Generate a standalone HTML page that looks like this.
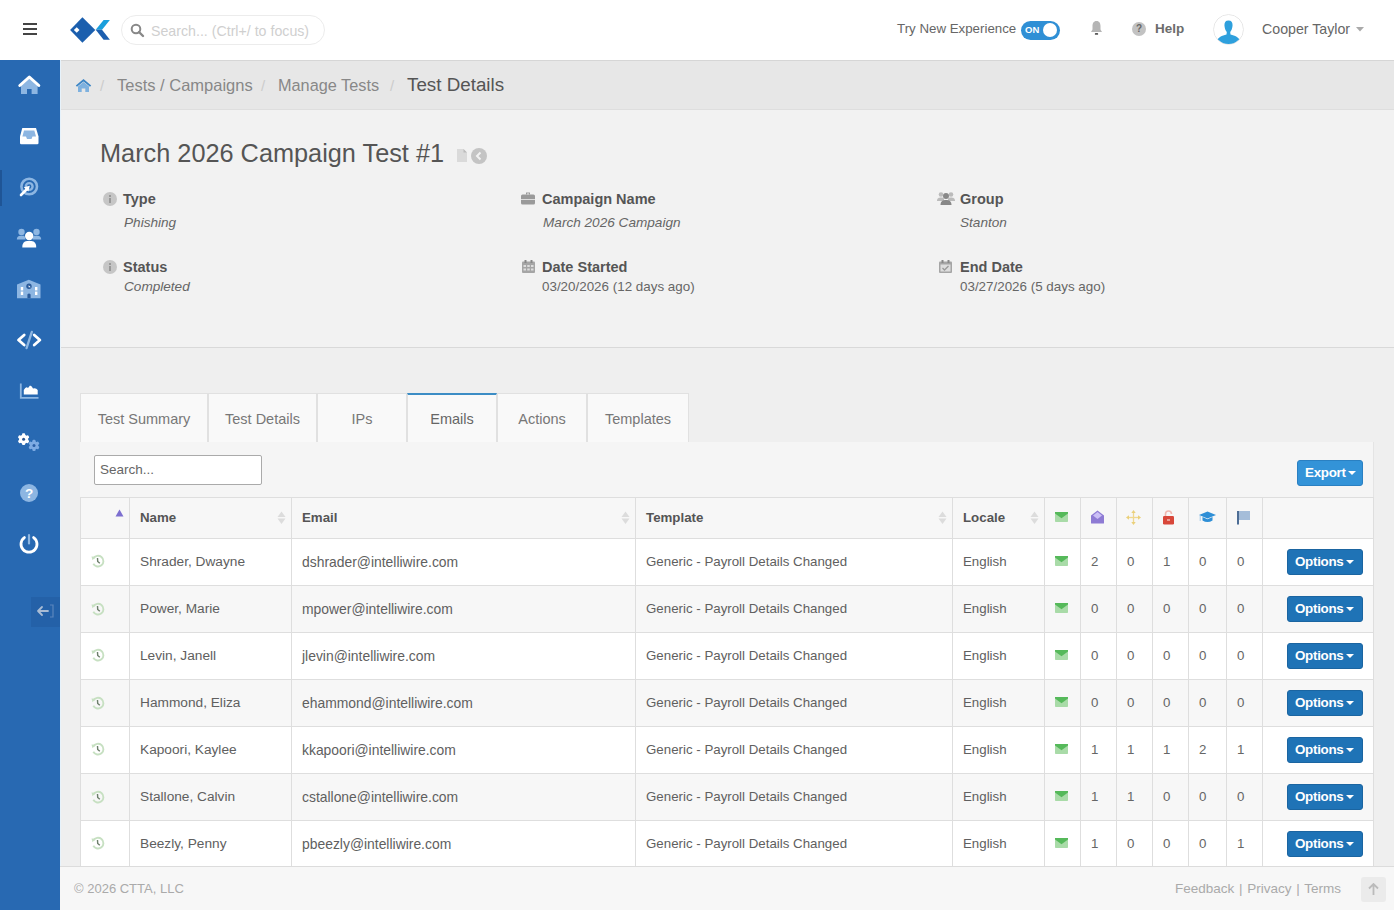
<!DOCTYPE html>
<html><head><meta charset="utf-8">
<style>
*{box-sizing:border-box;margin:0;padding:0}
html,body{width:1394px;height:910px;overflow:hidden}
body{font-family:"Liberation Sans",sans-serif;background:#efefef;position:relative;color:#555}
.abs{position:absolute}
.t{position:absolute;white-space:nowrap;line-height:1}
#top{left:0;top:0;width:1394px;height:60px;background:#fff}
#side{left:0;top:60px;width:60px;height:850px;background:#2869b2}
#crumb{left:60px;top:60px;width:1334px;height:50px;background:#e7e7e7;border-top:1px solid #d6d6d6;border-bottom:1px solid #dedede}
#info{left:60px;top:110px;width:1334px;height:238px;background:#f2f2f2;border-bottom:1px solid #d9d9d9}
.lbl{font-size:14.5px;font-weight:bold;color:#555}
.val{font-size:13px;color:#666}
.val i{font-style:italic;font-size:13.6px}
.tab{position:absolute;top:393px;height:49px;background:#f9f9f9;border:1px solid #e1e1e1;border-bottom:none;font-size:14.5px;color:#777;text-align:center;line-height:50px}
#panel{left:80px;top:442px;width:1294px;height:470px;background:#f5f5f5;border-right:1px solid #e4e4e4}
table{position:absolute;left:80px;top:497px;border-collapse:collapse;table-layout:fixed;width:1293px}
td,th{border:1px solid #dedede;height:47px;font-size:13.3px;color:#606060;white-space:nowrap;text-align:left;padding:0 0 1px 10px;vertical-align:middle}
th{height:41px;font-weight:bold;background:#f7f7f7;color:#555;padding-bottom:2px}
tr.g td{background:#f7f7f7}
tr.w td{background:#fff}
td.n{padding-left:10px;color:#666}
.btn{position:absolute;color:#fff;font-weight:bold;font-size:13.4px;letter-spacing:-0.3px;border-radius:3px;line-height:24px;text-align:left}
#foot{left:60px;top:866px;width:1334px;height:44px;background:#f7f7f7;border-top:1px solid #dcdcdc}
</style></head><body>
<!-- header -->
<div id="top" class="abs">
  <div class="abs" style="left:23px;top:23px;width:14px;height:2px;background:#444"></div>
  <div class="abs" style="left:23px;top:28px;width:14px;height:2px;background:#444"></div>
  <div class="abs" style="left:23px;top:33px;width:14px;height:2px;background:#444"></div>
  <svg class="abs" style="left:69px;top:16px" width="43" height="28" viewBox="0 0 43 28">
    <polygon points="1.1,14 13.4,1.3 26.3,14 13.4,26.7" fill="#1b5fae"/>
    <rect x="5.7" y="12" width="4" height="4" fill="#fff" transform="rotate(45 7.7 14)"/>
    <polygon points="26.7,13.8 34.6,4.1 40.9,4.1 33,13.8" fill="#1a9fdc"/>
    <polygon points="26.7,13.8 33,13.8 40.9,23.7 34.6,23.7" fill="#1c5eaf"/>
  </svg>
  <div class="abs" style="left:121px;top:15px;width:204px;height:30px;border:1px solid #ececec;border-radius:15px"></div>
  <svg class="abs" style="left:130px;top:23px" width="15" height="15" viewBox="0 0 15 15"><circle cx="6" cy="6" r="4.3" fill="none" stroke="#888" stroke-width="2"/><line x1="9" y1="9" x2="13" y2="13" stroke="#888" stroke-width="2.4" stroke-linecap="round"/></svg>
  <div class="t" style="left:151px;top:24px;font-size:14.2px;color:#cfcfcf">Search... (Ctrl+/ to focus)</div>

  <div class="t" style="left:897px;top:22px;font-size:13.3px;color:#666">Try New Experience</div>
  <div class="abs" style="left:1021px;top:21px;width:39px;height:19px;border-radius:10px;background:#2f8fd5"></div>
  <div class="t" style="left:1025px;top:25px;font-size:9.5px;font-weight:bold;color:#fff">ON</div>
  <div class="abs" style="left:1043px;top:23px;width:14px;height:14px;border-radius:50%;background:#fff"></div>
  <svg class="abs" style="left:1090px;top:20px" width="13" height="16" viewBox="0 0 13 16"><path d="M6.5 1 C3.5 1 2.5 3.5 2.5 6 L2.5 9.5 L1 12 L12 12 L10.5 9.5 L10.5 6 C10.5 3.5 9.5 1 6.5 1Z" fill="#b5b5b5"/><rect x="4.8" y="13" width="3.4" height="1.8" rx="0.9" fill="#555"/></svg>
  <div class="abs" style="left:1132px;top:22px;width:14px;height:14px;border-radius:50%;background:#c2c2c2"></div>
  <div class="t" style="left:1136px;top:24px;font-size:10px;font-weight:bold;color:#666">?</div>
  <div class="t" style="left:1155px;top:22px;font-size:13.5px;font-weight:bold;color:#6c6c6c">Help</div>
  <div class="abs" style="left:1213px;top:14px;width:31px;height:31px;border-radius:50%;border:1px solid #e6e6e6;overflow:hidden;background:#fff;clip-path:circle(50%)">
    <svg width="31" height="31" viewBox="0 0 31 31" style="position:absolute;left:-1px;top:-1px"><path d="M15.5 6.5 C12.2 6.5 11.2 9 11.5 12 C11.8 15 12.8 17 13.8 18 L13.5 20.5 C9 21.5 5 23 3.5 28 L3.5 31 L27.5 31 L27.5 28 C26 23 22 21.5 17.5 20.5 L17.2 18 C18.2 17 19.2 15 19.5 12 C19.8 9 18.8 6.5 15.5 6.5Z" fill="#2ea0dd"/></svg>
  </div>
  <div class="t" style="left:1262px;top:22px;font-size:14.2px;color:#666">Cooper Taylor</div>
  <svg class="abs" style="left:1356px;top:27px" width="8" height="5" viewBox="0 0 8 5"><polygon points="0,0 8,0 4,4.5" fill="#aaa"/></svg>
</div>

<!-- sidebar -->
<div id="side" class="abs">
  <div class="abs" style="left:0;top:110px;width:2px;height:36px;background:#1f5596"></div>
  <div class="abs" style="left:31px;top:537px;width:29px;height:30px;background:#2461a8"></div>
  <svg class="abs" style="left:0;top:0" width="60" height="850" viewBox="0 60 60 850">
    <!-- home -->
    <path d="M21 85 L29.3 78 L37.6 85 L37.6 94 L31.6 94 L31.6 89 L27 89 L27 94 L21 94Z" fill="#8db6e2"/>
    <polyline points="19.8,85.5 29.3,77 38.8,85.5" fill="none" stroke="#fff" stroke-width="3" stroke-linecap="round" stroke-linejoin="round"/>
    <!-- inbox -->
    <path d="M22.3 128 L36 128 L38.5 136.5 L38.5 143 Q38.5 144.3 37.2 144.3 L21.3 144.3 Q20 144.3 20 143 L20 136.5Z" fill="#fff"/>
    <path d="M24 130.5 L34.3 130.5 L36 136.5 L32.5 136.5 L31.5 139 L27 139 L26 136.5 L22.4 136.5Z" fill="#8db6e2"/>
    <!-- target -->
    <circle cx="29.2" cy="186.5" r="7.8" fill="none" stroke="#8db6e2" stroke-width="2.6"/>
    <circle cx="29.2" cy="186.5" r="3.4" fill="none" stroke="#8db6e2" stroke-width="2.4"/>
    <line x1="21" y1="195" x2="27" y2="189" stroke="#fff" stroke-width="2.6" stroke-linecap="round"/>
    <polygon points="29.8,185.8 23.8,187.2 28.4,191.6" fill="#fff"/>
    <!-- users -->
    <circle cx="21.5" cy="232" r="3.2" fill="#8db6e2"/>
    <circle cx="36.5" cy="232" r="3.2" fill="#8db6e2"/>
    <path d="M16.8 239.5 Q17 235.8 20.5 235.8 L24 235.8 Q25.5 236.5 25.5 239.5Z" fill="#8db6e2"/>
    <path d="M32.5 239.5 Q32.5 236.5 34 235.8 L37.5 235.8 Q41 235.8 41.2 239.5Z" fill="#8db6e2"/>
    <circle cx="29.2" cy="236" r="4.2" fill="#fff"/>
    <path d="M22.3 247.5 Q22.3 241 27 241 L31.5 241 Q36.2 241 36.2 247.5Z" fill="#fff"/>
    <!-- building -->
    <path d="M17 284.5 L28.8 279.8 L40.5 284.5 L40.5 298.2 L17 298.2Z" fill="#8db6e2"/>
    <rect x="20.8" y="287" width="2.4" height="3.4" fill="#fff"/><rect x="20.8" y="291.6" width="2.4" height="3.4" fill="#fff"/>
    <rect x="35" y="287" width="2.4" height="3.4" fill="#fff"/><rect x="35" y="291.6" width="2.4" height="3.4" fill="#fff"/>
    <circle cx="29" cy="286.3" r="2.7" fill="#2b5c9c"/>
    <path d="M28.6 285.2 L30.8 287.2 L28.6 287.2Z" fill="#fff"/>
    <path d="M27.4 298.2 L27.4 294.6 Q29 292.6 30.6 294.6 L30.6 298.2Z" fill="#2b5c9c"/>
    <!-- code -->
    <polyline points="24.2,335 18.5,340 24.2,345" fill="none" stroke="#fff" stroke-width="2.8" stroke-linecap="round" stroke-linejoin="round"/>
    <polyline points="34.2,335 39.9,340 34.2,345" fill="none" stroke="#fff" stroke-width="2.8" stroke-linecap="round" stroke-linejoin="round"/>
    <line x1="31.8" y1="332" x2="26.6" y2="348" stroke="#8db6e2" stroke-width="2.4" stroke-linecap="round"/>
    <!-- chart -->
    <path d="M20.8 383.5 L20.8 397.8 L38.5 397.8" fill="none" stroke="#8db6e2" stroke-width="1.8"/>
    <path d="M23.8 394.6 L23.8 390 Q26 386 28 388 L30 385.5 Q32 386 33 388.5 Q36 387.5 37.7 390 L37.7 394.6Z" fill="#fff"/>
    <!-- cogs -->
    <g transform="translate(23.6 439.2)" fill="#fff"><circle r="4.5"/><rect x="-1.6" y="-5.9" width="3.2" height="11.8" rx="1.1" transform="rotate(0)"/><rect x="-1.6" y="-5.9" width="3.2" height="11.8" rx="1.1" transform="rotate(60)"/><rect x="-1.6" y="-5.9" width="3.2" height="11.8" rx="1.1" transform="rotate(120)"/><circle r="1.5" fill="#2a5590"/></g>
    <g transform="translate(34 445.4)" fill="#7eabe3"><circle r="4.199999999999999"/><rect x="-1.6" y="-5.6" width="3.2" height="11.2" rx="1.1" transform="rotate(0)"/><rect x="-1.6" y="-5.6" width="3.2" height="11.2" rx="1.1" transform="rotate(60)"/><rect x="-1.6" y="-5.6" width="3.2" height="11.2" rx="1.1" transform="rotate(120)"/><circle r="1.5" fill="#2b5fa6"/></g>
    <!-- help -->
    <circle cx="29" cy="493" r="9" fill="#8db6e2"/>
    <text x="29" y="498.2" font-family="Liberation Sans" font-weight="bold" font-size="13.5" fill="#fff" text-anchor="middle">?</text>
    <!-- power -->
    <path d="M24.4 537.6 A8 8 0 1 0 33.6 537.6" fill="none" stroke="#fff" stroke-width="2.8" stroke-linecap="round"/>
    <line x1="29" y1="535" x2="29" y2="543.5" stroke="#8db6e2" stroke-width="2.2" stroke-linecap="round"/>
    <!-- collapse -->
    <path d="M38 611 L48 611 M42 607 L38 611 L42 615" fill="none" stroke="#a9bcd4" stroke-width="1.8" stroke-linecap="round" stroke-linejoin="round"/>
    <path d="M50 605 L53 605 L53 617 L50 617" fill="none" stroke="#5b86bd" stroke-width="1.2"/>
  </svg>
</div>

<!-- breadcrumb -->
<div id="crumb" class="abs">
  <svg class="abs" style="left:15px;top:17px" width="17" height="15" viewBox="0 0 17 15"><path d="M8.5 1 L0.8 7.5 L2 8.8 L8.5 3.4 L15 8.8 L16.2 7.5Z" fill="#3d86c6"/><path d="M3 8.5 L8.5 4 L14 8.5 L14 14 L10.3 14 L10.3 10.5 L6.7 10.5 L6.7 14 L3 14Z" fill="#7eb1df"/></svg>
  <div class="t" style="left:40px;top:17px;font-size:15px;color:#ccc">/</div>
  <div class="t" style="left:57px;top:16px;font-size:16.5px;color:#888">Tests / Campaigns</div>
  <div class="t" style="left:201px;top:17px;font-size:15px;color:#ccc">/</div>
  <div class="t" style="left:218px;top:16px;font-size:16.3px;color:#888">Manage Tests</div>
  <div class="t" style="left:330px;top:17px;font-size:15px;color:#ccc">/</div>
  <div class="t" style="left:347px;top:15px;font-size:18.8px;color:#555">Test Details</div>
</div>

<!-- info -->
<div id="info" class="abs">
  <div class="t" style="left:40px;top:31px;font-size:25.3px;color:#555">March 2026 Campaign Test #1</div>
  <svg class="abs" style="left:396px;top:38px" width="12" height="15" viewBox="0 0 12 15"><path d="M1 1 L7.5 1 L11 4.5 L11 14 L1 14Z" fill="#dadada"/><path d="M7.5 1 L7.5 4.5 L11 4.5Z" fill="#bbb"/></svg>
  <div class="abs" style="left:411px;top:38px;width:16px;height:16px;border-radius:50%;background:#c4c4c4"></div>
  <svg class="abs" style="left:411px;top:38px" width="16" height="16" viewBox="0 0 16 16"><polyline points="9.5,4.5 6,8 9.5,11.5" fill="none" stroke="#f2f2f2" stroke-width="2"/></svg>

  <!-- col1 -->
  <div class="abs" style="left:43px;top:82px;width:14px;height:14px;border-radius:50%;background:#c6c6c6"></div>
  <div class="abs" style="left:49px;top:85px;width:2px;height:2px;background:#999"></div>
  <div class="abs" style="left:49px;top:88px;width:1.6px;height:5px;background:#999"></div>
  <div class="t lbl" style="left:63px;top:82px">Type</div>
  <div class="t val" style="left:64px;top:106px"><i>Phishing</i></div>
  <div class="abs" style="left:43px;top:150px;width:14px;height:14px;border-radius:50%;background:#c6c6c6"></div>
  <div class="abs" style="left:49px;top:153px;width:2px;height:2px;background:#999"></div>
  <div class="abs" style="left:49px;top:156px;width:1.6px;height:5px;background:#999"></div>
  <div class="t lbl" style="left:63px;top:150px">Status</div>
  <div class="t val" style="left:64px;top:170px"><i>Completed</i></div>

  <!-- col2 -->
  <svg class="abs" style="left:461px;top:82px" width="14" height="13" viewBox="0 0 14 13"><path d="M5 0.5 L9 0.5 L9 2.5 L8 2.5 L8 1.5 L6 1.5 L6 2.5 L5 2.5Z" fill="#999"/><rect x="0" y="2.5" width="14" height="10" rx="1.5" fill="#9a9a9a"/><rect x="0" y="7" width="14" height="1" fill="#ddd"/></svg>
  <div class="t lbl" style="left:482px;top:82px;font-size:14.5px">Campaign Name</div>
  <div class="t val" style="left:483px;top:106px"><i>March 2026 Campaign</i></div>
  <svg class="abs" style="left:462px;top:150px" width="13" height="13" viewBox="0 0 13 13"><rect x="0" y="1.5" width="13" height="11.5" rx="1" fill="#a5a5a5"/><rect x="2.5" y="0" width="2" height="3" fill="#888"/><rect x="8.5" y="0" width="2" height="3" fill="#888"/><g fill="#ddd"><rect x="1.5" y="5" width="2.5" height="2"/><rect x="5.25" y="5" width="2.5" height="2"/><rect x="9" y="5" width="2.5" height="2"/><rect x="1.5" y="8.5" width="2.5" height="2"/><rect x="5.25" y="8.5" width="2.5" height="2"/><rect x="9" y="8.5" width="2.5" height="2"/></g></svg>
  <div class="t lbl" style="left:482px;top:150px;font-size:14.5px">Date Started</div>
  <div class="t val" style="left:482px;top:170px;font-size:13.4px">03/20/2026 (12 days ago)</div>

  <!-- col3 -->
  <svg class="abs" style="left:877px;top:81px" width="18" height="15" viewBox="0 0 18 15"><circle cx="4" cy="3.5" r="2.3" fill="#bbb"/><circle cx="14" cy="3.5" r="2.3" fill="#bbb"/><path d="M0 10 C0 7 2 6.5 4 6.5 C6 6.5 7 7 7 8 L7 10Z" fill="#bbb"/><path d="M11 8 C11 7 12 6.5 14 6.5 C16 6.5 18 7 18 10 L11 10Z" fill="#bbb"/><circle cx="9" cy="5" r="3" fill="#888"/><path d="M3.5 14 C3.5 10 6 9 9 9 C12 9 14.5 10 14.5 14Z" fill="#888"/></svg>
  <div class="t lbl" style="left:900px;top:82px;font-size:14.5px">Group</div>
  <div class="t val" style="left:900px;top:106px"><i>Stanton</i></div>
  <svg class="abs" style="left:879px;top:150px" width="13" height="13" viewBox="0 0 13 13"><rect x="0" y="1.5" width="13" height="11.5" rx="1" fill="#a5a5a5"/><rect x="2.5" y="0" width="2" height="3" fill="#888"/><rect x="8.5" y="0" width="2" height="3" fill="#888"/><rect x="1.5" y="4.5" width="10" height="7" fill="#ddd"/><polyline points="3.5,8 5.5,10 9.5,6" fill="none" stroke="#999" stroke-width="1.3"/></svg>
  <div class="t lbl" style="left:900px;top:150px;font-size:14.5px">End Date</div>
  <div class="t val" style="left:900px;top:170px;font-size:13.4px">03/27/2026 (5 days ago)</div>
</div>

<!-- tabs -->
<div class="tab" style="left:80px;width:128px">Test Summary</div>
<div class="tab" style="left:208px;width:109px">Test Details</div>
<div class="tab" style="left:317px;width:90px">IPs</div>
<div class="tab" style="left:407px;width:90px;border-top:2px solid #3c8dc5;color:#666;line-height:48px">Emails</div>
<div class="tab" style="left:497px;width:90px">Actions</div>
<div class="tab" style="left:587px;width:102px">Templates</div>

<div id="panel" class="abs"></div>
<div class="abs" style="left:94px;top:455px;width:168px;height:30px;background:#fff;border:1px solid #aaa;border-radius:2px"></div>
<div class="t" style="left:100px;top:463px;font-size:13.5px;color:#666">Search...</div>
<div class="btn" style="left:1297px;top:460px;width:66px;height:26px;background:#3393d8;border:1px solid #2a80c2;padding-left:7px">Export <span style="display:inline-block;width:0;height:0;border-left:4px solid transparent;border-right:4px solid transparent;border-top:4px solid #fff;vertical-align:middle;margin-left:-1px"></span></div>

<table>
<colgroup><col style="width:49px"><col style="width:162px"><col style="width:344px"><col style="width:317px"><col style="width:92px"><col style="width:36px"><col style="width:36px"><col style="width:36px"><col style="width:36px"><col style="width:38px"><col style="width:36px"><col style="width:111px"></colgroup>
<tr><th></th><th>Name</th><th>Email</th><th>Template</th><th>Locale</th><th></th><th></th><th></th><th></th><th></th><th></th><th></th></tr>
<tr class="w"><td></td><td style="font-size:13.7px">Shrader, Dwayne</td><td style="font-size:13.9px">dshrader@intelliwire.com</td><td>Generic - Payroll Details Changed</td><td>English</td><td></td><td class="n">2</td><td class="n">0</td><td class="n">1</td><td class="n">0</td><td class="n">0</td><td></td></tr>
<tr class="g"><td></td><td style="font-size:13.7px">Power, Marie</td><td style="font-size:13.9px">mpower@intelliwire.com</td><td>Generic - Payroll Details Changed</td><td>English</td><td></td><td class="n">0</td><td class="n">0</td><td class="n">0</td><td class="n">0</td><td class="n">0</td><td></td></tr>
<tr class="w"><td></td><td style="font-size:13.7px">Levin, Janell</td><td style="font-size:13.9px">jlevin@intelliwire.com</td><td>Generic - Payroll Details Changed</td><td>English</td><td></td><td class="n">0</td><td class="n">0</td><td class="n">0</td><td class="n">0</td><td class="n">0</td><td></td></tr>
<tr class="g"><td></td><td style="font-size:13.7px">Hammond, Eliza</td><td style="font-size:13.9px">ehammond@intelliwire.com</td><td>Generic - Payroll Details Changed</td><td>English</td><td></td><td class="n">0</td><td class="n">0</td><td class="n">0</td><td class="n">0</td><td class="n">0</td><td></td></tr>
<tr class="w"><td></td><td style="font-size:13.7px">Kapoori, Kaylee</td><td style="font-size:13.9px">kkapoori@intelliwire.com</td><td>Generic - Payroll Details Changed</td><td>English</td><td></td><td class="n">1</td><td class="n">1</td><td class="n">1</td><td class="n">2</td><td class="n">1</td><td></td></tr>
<tr class="g"><td></td><td style="font-size:13.7px">Stallone, Calvin</td><td style="font-size:13.9px">cstallone@intelliwire.com</td><td>Generic - Payroll Details Changed</td><td>English</td><td></td><td class="n">1</td><td class="n">1</td><td class="n">0</td><td class="n">0</td><td class="n">0</td><td></td></tr>
<tr class="w"><td></td><td style="font-size:13.7px">Beezly, Penny</td><td style="font-size:13.9px">pbeezly@intelliwire.com</td><td>Generic - Payroll Details Changed</td><td>English</td><td></td><td class="n">1</td><td class="n">0</td><td class="n">0</td><td class="n">0</td><td class="n">1</td><td></td></tr>
<tr class="g"><td></td><td></td><td></td><td></td><td></td><td></td><td></td><td></td><td></td><td></td><td></td><td></td></tr>
</table>

<div id="overlay">
<svg class="abs" style="left:115px;top:509px" width="9" height="8" viewBox="0 0 9 8"><polygon points="0.5,7.5 4.5,0.5 8.5,7.5" fill="#7d6fd0"/></svg>
<svg class="abs" style="left:277.0px;top:511px" width="9" height="14" viewBox="0 0 9 14"><polygon points="0.5,6 4.5,0.5 8.5,6" fill="#dcdcdc"/><polygon points="0.5,7.5 8.5,7.5 4.5,13" fill="#dcdcdc"/></svg>
<svg class="abs" style="left:621.0px;top:511px" width="9" height="14" viewBox="0 0 9 14"><polygon points="0.5,6 4.5,0.5 8.5,6" fill="#dcdcdc"/><polygon points="0.5,7.5 8.5,7.5 4.5,13" fill="#dcdcdc"/></svg>
<svg class="abs" style="left:937.5px;top:511px" width="9" height="14" viewBox="0 0 9 14"><polygon points="0.5,6 4.5,0.5 8.5,6" fill="#dcdcdc"/><polygon points="0.5,7.5 8.5,7.5 4.5,13" fill="#dcdcdc"/></svg>
<svg class="abs" style="left:1029.5px;top:511px" width="9" height="14" viewBox="0 0 9 14"><polygon points="0.5,6 4.5,0.5 8.5,6" fill="#dcdcdc"/><polygon points="0.5,7.5 8.5,7.5 4.5,13" fill="#dcdcdc"/></svg>
<svg class="abs" style="left:1055px;top:512px" width="13" height="10" viewBox="0 0 13 10"><rect x="0" y="0" width="13" height="10" rx="0.8" fill="#a9dba8"/><polygon points="0,0 13,0 13,1.5 6.5,6.3 0,1.5" fill="#55b95a"/></svg>
<svg class="abs" style="left:1091px;top:510px" width="13" height="14" viewBox="0 0 13 14"><path d="M0 5.5 L6.5 0.5 L13 5.5 L13 13 Q13 13.5 12.5 13.5 L0.5 13.5 Q0 13.5 0 13Z" fill="#8e7bd4"/><polygon points="2,5.5 6.5,2 11,5.5 6.5,9" fill="#cbbff6"/></svg>
<svg class="abs" style="left:1126px;top:510px" width="15" height="15" viewBox="0 0 15 15"><g stroke="#f0d88e" stroke-width="1.3" fill="none"><line x1="7.5" y1="2" x2="7.5" y2="13"/><line x1="2" y1="7.5" x2="13" y2="7.5"/></g><g fill="#ead07a"><polygon points="7.5,0 5.3,3 9.7,3"/><polygon points="7.5,15 5.3,12 9.7,12"/><polygon points="0,7.5 3,5.3 3,9.7"/><polygon points="15,7.5 12,5.3 12,9.7"/></g></svg>
<svg class="abs" style="left:1162px;top:510px" width="13" height="15" viewBox="0 0 13 15"><path d="M3.5 6 L3.5 4 Q3.5 1 6.5 1 Q9.5 1 9.5 4" fill="none" stroke="#f0b8b0" stroke-width="1.6"/><rect x="1" y="6" width="11" height="8.5" rx="1.2" fill="#d8473a"/><rect x="5" y="9.3" width="3" height="1.4" fill="#f4c2bb"/></svg>
<svg class="abs" style="left:1199px;top:511px" width="17" height="12" viewBox="0 0 17 12"><polygon points="0,4 8.5,0.5 17,4 8.5,7.5" fill="#2f8fd6"/><path d="M3.5 6 L3.5 9.5 Q8.5 12.5 13.5 9.5 L13.5 6 L8.5 8.3Z" fill="#2f8fd6"/><line x1="1.2" y1="4.5" x2="1.2" y2="10" stroke="#8fc0e8" stroke-width="0.8"/></svg>
<svg class="abs" style="left:1236px;top:511px" width="14" height="14" viewBox="0 0 14 14"><rect x="1" y="0" width="2" height="13.5" fill="#4d6d95"/><rect x="3" y="0" width="11" height="9" fill="#a5bdd9"/></svg>
<svg class="abs" style="left:1055px;top:556px" width="13" height="10" viewBox="0 0 13 10"><rect x="0" y="0" width="13" height="10" rx="0.8" fill="#a9dba8"/><polygon points="0,0 13,0 13,1.5 6.5,6.3 0,1.5" fill="#55b95a"/></svg>
<svg class="abs" style="left:91px;top:554px" width="14" height="14" viewBox="0 0 14 14"><path d="M2.3 4.5 A5.4 5.4 0 1 1 2.3 9.8" fill="none" stroke="#c7e0c2" stroke-width="1.9"/><polygon points="0.5,2.5 4.8,2.8 1.5,6.3" fill="#c7e0c2"/><path d="M6.5 4 L6.7 7.4 L8.8 9.3" fill="none" stroke="#6c7e6a" stroke-width="1.4"/></svg>
<div class="btn" style="left:1287px;top:549px;width:76px;height:26px;background:#1f73b6;border:1px solid #1b65a1;padding-left:7px">Options <span style="display:inline-block;width:0;height:0;border-left:4px solid transparent;border-right:4px solid transparent;border-top:4px solid #fff;vertical-align:middle;margin-left:-1px"></span></div>
<svg class="abs" style="left:1055px;top:603px" width="13" height="10" viewBox="0 0 13 10"><rect x="0" y="0" width="13" height="10" rx="0.8" fill="#a9dba8"/><polygon points="0,0 13,0 13,1.5 6.5,6.3 0,1.5" fill="#55b95a"/></svg>
<svg class="abs" style="left:91px;top:602px" width="14" height="14" viewBox="0 0 14 14"><path d="M2.3 4.5 A5.4 5.4 0 1 1 2.3 9.8" fill="none" stroke="#c7e0c2" stroke-width="1.9"/><polygon points="0.5,2.5 4.8,2.8 1.5,6.3" fill="#c7e0c2"/><path d="M6.5 4 L6.7 7.4 L8.8 9.3" fill="none" stroke="#6c7e6a" stroke-width="1.4"/></svg>
<div class="btn" style="left:1287px;top:596px;width:76px;height:26px;background:#1f73b6;border:1px solid #1b65a1;padding-left:7px">Options <span style="display:inline-block;width:0;height:0;border-left:4px solid transparent;border-right:4px solid transparent;border-top:4px solid #fff;vertical-align:middle;margin-left:-1px"></span></div>
<svg class="abs" style="left:1055px;top:650px" width="13" height="10" viewBox="0 0 13 10"><rect x="0" y="0" width="13" height="10" rx="0.8" fill="#a9dba8"/><polygon points="0,0 13,0 13,1.5 6.5,6.3 0,1.5" fill="#55b95a"/></svg>
<svg class="abs" style="left:91px;top:648px" width="14" height="14" viewBox="0 0 14 14"><path d="M2.3 4.5 A5.4 5.4 0 1 1 2.3 9.8" fill="none" stroke="#c7e0c2" stroke-width="1.9"/><polygon points="0.5,2.5 4.8,2.8 1.5,6.3" fill="#c7e0c2"/><path d="M6.5 4 L6.7 7.4 L8.8 9.3" fill="none" stroke="#6c7e6a" stroke-width="1.4"/></svg>
<div class="btn" style="left:1287px;top:643px;width:76px;height:26px;background:#1f73b6;border:1px solid #1b65a1;padding-left:7px">Options <span style="display:inline-block;width:0;height:0;border-left:4px solid transparent;border-right:4px solid transparent;border-top:4px solid #fff;vertical-align:middle;margin-left:-1px"></span></div>
<svg class="abs" style="left:1055px;top:697px" width="13" height="10" viewBox="0 0 13 10"><rect x="0" y="0" width="13" height="10" rx="0.8" fill="#a9dba8"/><polygon points="0,0 13,0 13,1.5 6.5,6.3 0,1.5" fill="#55b95a"/></svg>
<svg class="abs" style="left:91px;top:696px" width="14" height="14" viewBox="0 0 14 14"><path d="M2.3 4.5 A5.4 5.4 0 1 1 2.3 9.8" fill="none" stroke="#c7e0c2" stroke-width="1.9"/><polygon points="0.5,2.5 4.8,2.8 1.5,6.3" fill="#c7e0c2"/><path d="M6.5 4 L6.7 7.4 L8.8 9.3" fill="none" stroke="#6c7e6a" stroke-width="1.4"/></svg>
<div class="btn" style="left:1287px;top:690px;width:76px;height:26px;background:#1f73b6;border:1px solid #1b65a1;padding-left:7px">Options <span style="display:inline-block;width:0;height:0;border-left:4px solid transparent;border-right:4px solid transparent;border-top:4px solid #fff;vertical-align:middle;margin-left:-1px"></span></div>
<svg class="abs" style="left:1055px;top:744px" width="13" height="10" viewBox="0 0 13 10"><rect x="0" y="0" width="13" height="10" rx="0.8" fill="#a9dba8"/><polygon points="0,0 13,0 13,1.5 6.5,6.3 0,1.5" fill="#55b95a"/></svg>
<svg class="abs" style="left:91px;top:742px" width="14" height="14" viewBox="0 0 14 14"><path d="M2.3 4.5 A5.4 5.4 0 1 1 2.3 9.8" fill="none" stroke="#c7e0c2" stroke-width="1.9"/><polygon points="0.5,2.5 4.8,2.8 1.5,6.3" fill="#c7e0c2"/><path d="M6.5 4 L6.7 7.4 L8.8 9.3" fill="none" stroke="#6c7e6a" stroke-width="1.4"/></svg>
<div class="btn" style="left:1287px;top:737px;width:76px;height:26px;background:#1f73b6;border:1px solid #1b65a1;padding-left:7px">Options <span style="display:inline-block;width:0;height:0;border-left:4px solid transparent;border-right:4px solid transparent;border-top:4px solid #fff;vertical-align:middle;margin-left:-1px"></span></div>
<svg class="abs" style="left:1055px;top:791px" width="13" height="10" viewBox="0 0 13 10"><rect x="0" y="0" width="13" height="10" rx="0.8" fill="#a9dba8"/><polygon points="0,0 13,0 13,1.5 6.5,6.3 0,1.5" fill="#55b95a"/></svg>
<svg class="abs" style="left:91px;top:790px" width="14" height="14" viewBox="0 0 14 14"><path d="M2.3 4.5 A5.4 5.4 0 1 1 2.3 9.8" fill="none" stroke="#c7e0c2" stroke-width="1.9"/><polygon points="0.5,2.5 4.8,2.8 1.5,6.3" fill="#c7e0c2"/><path d="M6.5 4 L6.7 7.4 L8.8 9.3" fill="none" stroke="#6c7e6a" stroke-width="1.4"/></svg>
<div class="btn" style="left:1287px;top:784px;width:76px;height:26px;background:#1f73b6;border:1px solid #1b65a1;padding-left:7px">Options <span style="display:inline-block;width:0;height:0;border-left:4px solid transparent;border-right:4px solid transparent;border-top:4px solid #fff;vertical-align:middle;margin-left:-1px"></span></div>
<svg class="abs" style="left:1055px;top:838px" width="13" height="10" viewBox="0 0 13 10"><rect x="0" y="0" width="13" height="10" rx="0.8" fill="#a9dba8"/><polygon points="0,0 13,0 13,1.5 6.5,6.3 0,1.5" fill="#55b95a"/></svg>
<svg class="abs" style="left:91px;top:836px" width="14" height="14" viewBox="0 0 14 14"><path d="M2.3 4.5 A5.4 5.4 0 1 1 2.3 9.8" fill="none" stroke="#c7e0c2" stroke-width="1.9"/><polygon points="0.5,2.5 4.8,2.8 1.5,6.3" fill="#c7e0c2"/><path d="M6.5 4 L6.7 7.4 L8.8 9.3" fill="none" stroke="#6c7e6a" stroke-width="1.4"/></svg>
<div class="btn" style="left:1287px;top:831px;width:76px;height:26px;background:#1f73b6;border:1px solid #1b65a1;padding-left:7px">Options <span style="display:inline-block;width:0;height:0;border-left:4px solid transparent;border-right:4px solid transparent;border-top:4px solid #fff;vertical-align:middle;margin-left:-1px"></span></div>
</div>

<div class="abs" style="left:60px;top:60px;width:1px;height:850px;background:#e6f2fb"></div>
<!-- footer -->
<div id="foot" class="abs">
  <div class="t" style="left:14px;top:15px;font-size:13px;color:#aaa">© 2026 CTTA, LLC</div>
  <div class="t" style="left:1115px;top:15px;font-size:13.5px;color:#aaa;word-spacing:1px">Feedback | Privacy | Terms</div>
  <div class="abs" style="left:1301px;top:10px;width:25px;height:25px;background:#ebebeb;border-radius:3px"></div>
  <svg class="abs" style="left:1307px;top:16px" width="13" height="13" viewBox="0 0 13 13"><path d="M6.5 1 L6.5 12 M2 5.5 L6.5 1 L11 5.5" fill="none" stroke="#bbb" stroke-width="1.8"/></svg>
</div>
</body></html>
